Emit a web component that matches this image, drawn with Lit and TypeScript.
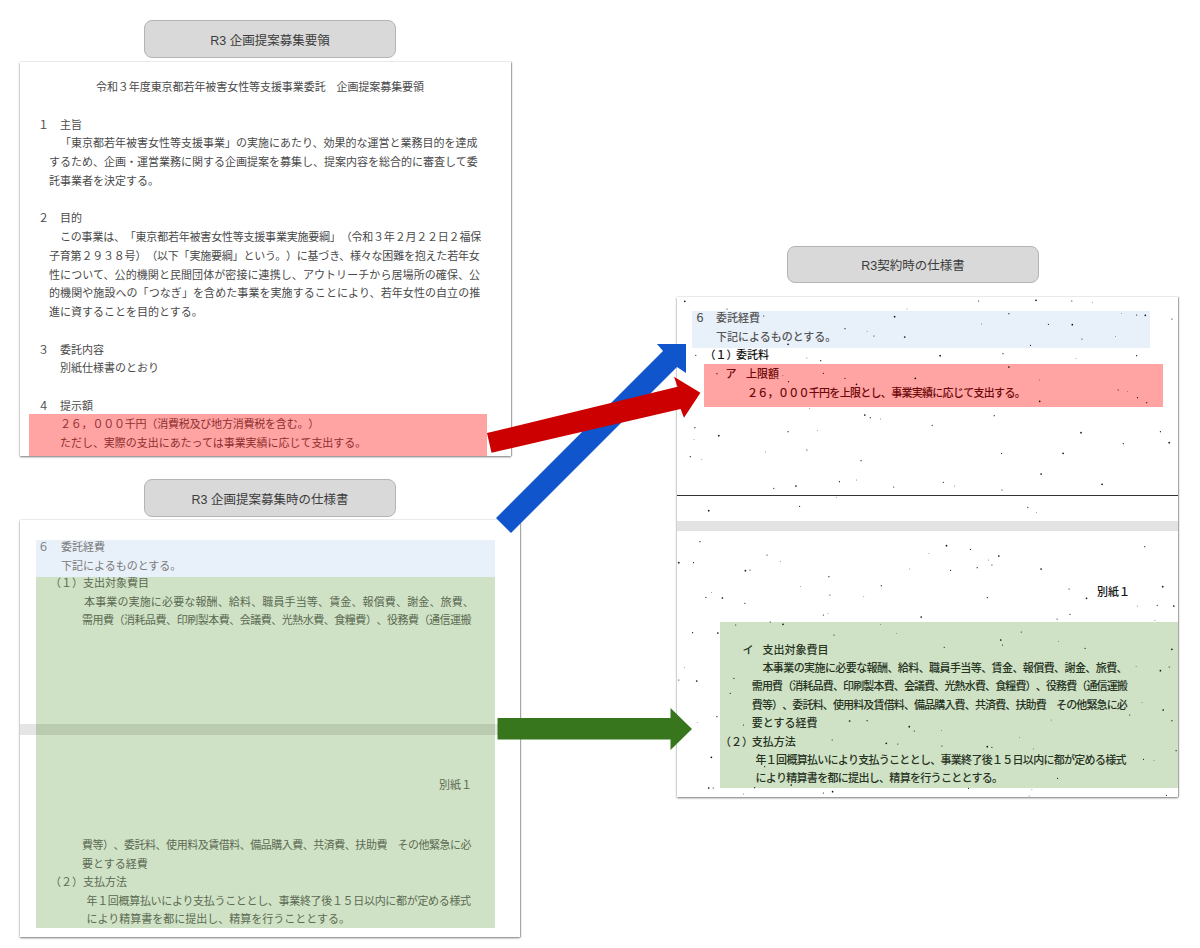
import { LitElement, html, css, svg } from "lit";
import { customElement } from "lit/decorators.js";

interface Row { x: number; t: string; end?: number; px?: number; p?: string }

const FS = 11;

const doc1Top: (Row | null)[] = [
  { x: 96, t: "令和３年度東京都若年被害女性等支援事業委託　企画提案募集要領", end: 424 },
  null,
  { px: 38, p: "１", x: 60, t: "主旨" },
  { x: 60, t: "「東京都若年被害女性等支援事業」の実施にあたり、効果的な運営と業務目的を達成", end: 478 },
  { x: 49, t: "するため、企画・運営業務に関する企画提案を募集し、提案内容を総合的に審査して委", end: 478 },
  { x: 49, t: "託事業者を決定する。" },
  null,
  { px: 38, p: "２", x: 60, t: "目的" },
  { x: 60, t: "この事業は、「東京都若年被害女性等支援事業実施要綱」（令和３年２月２２日２福保", end: 481 },
  { x: 49, t: "子育第２９３８号）（以下「実施要綱」という。）に基づき、様々な困難を抱えた若年女", end: 481 },
  { x: 49, t: "性について、公的機関と民間団体が密接に連携し、アウトリーチから居場所の確保、公", end: 481 },
  { x: 49, t: "的機関や施設への「つなぎ」を含めた事業を実施することにより、若年女性の自立の推", end: 481 },
  { x: 49, t: "進に資することを目的とする。" },
  null,
  { px: 38, p: "３", x: 60, t: "委託内容" },
  { x: 60, t: "別紙仕様書のとおり" },
  null,
  { px: 38, p: "４", x: 60, t: "提示額" },
];
const doc1Red: Row[] = [
  { x: 60, t: "２６，０００千円（消費税及び地方消費税を含む。）", end: 319 },
  { x: 60, t: "ただし、実際の支出にあたっては事業実績に応じて支出する。", end: 367 },
];

const doc2Blue: Row[] = [
  { px: 38, p: "６", x: 61, t: "委託経費" },
  { x: 61, t: "下記によるものとする。" },
];
const doc2GreenA: Row[] = [
  { px: 50, p: "（１）", x: 83, t: "支出対象費目" },
  { x: 84, t: "本事業の実施に必要な報酬、給料、職員手当等、賃金、報償費、謝金、旅費、", end: 474 },
  { x: 82, t: "需用費（消耗品費、印刷製本費、会議費、光熱水費、食糧費）、役務費（通信運搬", end: 471 },
];
const doc2GreenB: Row = { x: 439, t: "別紙１" };
const doc2GreenC: Row[] = [
  { x: 82, t: "費等）、委託料、使用料及賃借料、備品購入費、共済費、扶助費　その他緊急に必", end: 471 },
  { x: 82, t: "要とする経費" },
  { px: 50, p: "（２）", x: 83, t: "支払方法" },
  { x: 86.5, t: "年１回概算払いにより支払うこととし、事業終了後１５日以内に都が定める様式", end: 471 },
  { x: 86.5, t: "により精算書を都に提出し、精算を行うこととする。" },
];

const doc3Blue: Row[] = [
  { px: 694.6, p: "６", x: 716, t: "委託経費" },
  { x: 716, t: "下記によるものとする。" },
];
const doc3Mid: Row = { px: 704.5, p: "（１）", x: 736, t: "委託料" };
const doc3Red: Row[] = [
  { px: 725.6, p: "ア", x: 746, t: "上限額" },
  { x: 747, t: "２６，０００千円を上限とし、事業実績に応じて支出する。", end: 1025 },
];
const doc3Green: Row[] = [
  { px: 742.6, p: "イ", x: 762.4, t: "支出対象費目" },
  { x: 762.4, t: "本事業の実施に必要な報酬、給料、職員手当等、賃金、報償費、謝金、旅費、", end: 1127 },
  { x: 751.8, t: "需用費（消耗品費、印刷製本費、会議費、光熱水費、食糧費）、役務費（通信運搬", end: 1127 },
  { x: 751.8, t: "費等）、委託料、使用料及賃借料、備品購入費、共済費、扶助費　その他緊急に必", end: 1127 },
  { x: 751.8, t: "要とする経費" },
  { px: 720, p: "（２）", x: 751.8, t: "支払方法" },
  { x: 755.5, t: "年１回概算払いにより支払うこととし、事業終了後１５日以内に都が定める様式", end: 1126 },
  { x: 755.5, t: "により精算書を都に提出し、精算を行うこととする。", end: 1003 },
];

// Scan specks, as [x, y] read from the reference at two different crop scales.
const specksA = [[446,184],[538,207],[930,207],[1086,183],[1211,181],[1289,183],[1334,187],[618,228],[903,230],[1152,221],[1397,221],[1430,225],[1449,226],[1507,237],[1092,252],[1238,253],[1290,254],[795,266],[843,275],[858,288],[925,291],[1311,297],[1384,290],[1199,316],[671,313],[470,346],[712,354],[742,362],[1002,347],[1139,341],[1298,355],[1430,347],[1152,381],[516,401],[660,407],[748,400],[948,415],[795,415],[1218,420],[672,425],[820,433],[1390,450],[1411,455],[1432,473],[1219,484],[1452,488],[718,506],[1120,527],[838,525],[850,533],[872,537],[468,563],[520,587],[671,575],[735,572],[985,556],[1309,578],[1482,575],[466,598],[1401,611],[1501,608],[712,630],[622,636],[1136,640],[1270,640],[458,650],[483,658],[830,662],[1222,702],[783,725],[820,720],[1009,727],[688,738],[901,741],[1033,738],[640,745],[1355,733],[1137,750],[777,772],[696,799],[498,812],[1193,802],[1212,818]];
const specksB = [[479,65],[1016,77],[1448,80],[978,101],[1068,88],[1130,108],[625,105],[1107,120],[1115,135],[433,128],[465,128],[655,125],[1083,143],[578,152],[588,150],[936,147],[1025,151],[1222,147],[760,170],[698,200],[874,197],[1487,200],[1283,207],[504,218],[492,232],[528,234],[762,225],[836,230],[1105,233],[1321,235],[577,250],[1432,258],[1475,256],[1511,258],[748,285],[758,280],[1285,283],[961,291],[1257,297],[1470,302],[632,306],[660,313],[557,315],[872,313],[463,338],[518,339],[771,345],[907,340],[1179,336],[1134,360],[1138,375],[1260,365],[1011,382],[1507,388],[1318,385],[445,443],[433,480],[472,483],[553,475],[1429,440],[1501,441],[1482,452],[545,520],[1442,548],[516,590],[1488,570],[1415,585],[473,608],[574,615],[805,603],[843,602],[1244,600],[1507,602],[935,620],[946,633],[1005,632],[767,660],[885,670],[910,672],[1175,652],[1006,678],[1105,680],[1115,682],[1205,687],[1516,692],[504,712],[1445,718],[1468,722],[620,740],[498,804],[508,804],[574,822],[598,803],[678,795],[1064,805],[1202,808],[748,819],[768,815],[1495,826],[1196,828],[1258,775]];

function renderRow(r: Row, base: number, cls = "") {
  const start = r.px ?? r.x;
  const n = [...r.t].length;
  const ls = r.end ? (r.end - r.x - n * FS) / n : 0;
  return html`<div class="row ${cls}" style="margin-left:${start - base}px">
    ${r.p ? html`<span class="pre" style="width:${r.x - start}px">${r.p}</span>` : ""}
    <span style="letter-spacing:${ls.toFixed(3)}px">${r.t}</span>
  </div>`;
}

@customElement("app-root")
export class AppRoot extends LitElement {
  static styles = css`
    :host {
      display: block;
      width: 1200px;
      height: 948px;
      position: relative;
      overflow: hidden;
      background: #fff;
      font-family: "Liberation Serif", "Noto Sans CJK JP", serif;
      font-size: 11px;
      text-spacing-trim: space-all;
      font-feature-settings: "chws" 0;
    }
    .page { display: flex; height: 948px; }
    .left { width: 520px; padding-left: 20px; padding-top: 20px; box-sizing: content-box; }
    .right { margin-left: 137px; padding-top: 246px; width: 501px; }
    .label {
      box-sizing: border-box;
      width: 252px;
      height: 38px;
      display: flex;
      align-items: center;
      justify-content: center;
      background: #d9d9d9;
      border: 1px solid #b4b4b4;
      border-radius: 8px;
      font-family: "Liberation Sans", "Noto Sans CJK JP", sans-serif;
      font-size: 12.5px;
      color: #3c3c3c;
    }
    .l1 { margin-left: 124px; }
    .l2 { margin-left: 124px; margin-top: 23px; }
    .l3 { margin-left: 110px; height: 37px; }
    .paper {
      position: relative;
      background: #fff;
      box-shadow: 0 1px 2px rgba(0, 0, 0, 0.5), 1px 0 1px rgba(0, 0, 0, 0.2), 0 0 1px rgba(0, 0, 0, 0.12);
      box-sizing: border-box;
      color: #4a4a4a;
    }
    .p1 { width: 491px; height: 394px; margin-top: 4px; padding-top: 16px; overflow: hidden; }
    .p2 { width: 500px; height: 417px; margin-top: 3px; padding-top: 20px; }
    .p3 { width: 501px; height: 500px; margin-top: 14px; padding-top: 14px; color: #111; font-weight: 500; overflow: hidden; }
    .row { display: flex; white-space: pre; height: 12px; line-height: 12px; margin-bottom: 6.5px; }
    .tall { height: 18.76px; line-height: 18.76px; margin-bottom: 0; }
    .pre { display: inline-block; flex: none; }
    .blank { height: 18.76px; }

    .red1 { margin-left: 9px; width: 458px; height: 42px; margin-top: -1.78px; background: #ffa3a3; color: #8f2f2f; padding-top: 1.38px; box-sizing: border-box; }
    .blue2 { margin-left: 16px; width: 459px; height: 37px; padding-top: 1px; box-sizing: border-box; background: #e8f0f9; color: #7a7a7a; }
    .green2 { margin-left: 16px; width: 459px; height: 351px; background: #d0e2c5; color: #5b6a53; box-sizing: border-box; }
    .gap-a { margin-top: 153px; }
    .gap-b { margin-top: 48px; }
    .band { position: absolute; left: 0; right: 0; background: rgba(0, 0, 0, 0.1); }
    .band2 { top: 204px; height: 11px; }

    .blue3 { margin-left: 15px; width: 458px; height: 37px; padding-top: 1px; box-sizing: border-box; background: #e8f0f9; color: #555; }
    .mid3 { margin-top: 1px; margin-bottom: 3.3px; }
    .red3 { margin-left: 27px; width: 459px; height: 43px; padding-top: 3.5px; box-sizing: border-box; background: #ffa3a3; color: #6e0808; }
    .red3 .row { margin-bottom: 6.8px; }
    .rule { height: 1px; background: #333; margin-top: 88px; }
    .band3 { height: 10px; margin-top: 25px; background: #e3e3e3; }
    .right-note { margin-top: 54.7px; margin-bottom: 0; letter-spacing: -1px; }
    .green3 { margin-left: 43px; width: 458px; height: 166px; margin-top: 24.3px; padding-top: 21.3px; box-sizing: border-box; background: #d0e2c5; color: #26331f; }
    .green3 .row { margin-bottom: 6.4px; }
    .specks { position: absolute; inset: 0; width: 100%; height: 100%; pointer-events: none; }
    .arrows { position: absolute; left: 0; top: 0; width: 1200px; height: 948px; pointer-events: none; }
  `;

  private specks() {
    const dots = [
      ...specksA.map(([x, y]) => [480 + x / 2.178 - 677, 240 + y / 3 - 297]),
      ...specksB.map(([x, y]) => [480 + x / 2.178 - 677, 520 + y / 3 - 297]),
    ];
    return svg`${dots.map(
      ([x, y], i) => svg`<circle cx=${x.toFixed(1)} cy=${y.toFixed(1)} r=${i % 4 === 0 ? 0.85 : i % 4 === 2 ? 0.4 : 0.6} fill="#111"></circle>`
    )}`;
  }

  render() {
    return html`
      <div class="page">
        <div class="left">
          <div class="label l1">R3 企画提案募集要領</div>
          <div class="paper p1">
            ${doc1Top.map((r) => (r ? renderRow(r, 20, "tall") : html`<div class="blank"></div>`))}
            <div class="red1">${doc1Red.map((r) => renderRow(r, 29, "tall"))}</div>
          </div>
          <div class="label l2">R3 企画提案募集時の仕様書</div>
          <div class="paper p2">
            <div class="blue2">${doc2Blue.map((r) => renderRow(r, 36))}</div>
            <div class="green2">
              ${doc2GreenA.map((r) => renderRow(r, 36))}
              ${renderRow(doc2GreenB, 36, "gap-a")}
              ${doc2GreenC.map((r, i) => renderRow(r, 36, i === 0 ? "gap-b" : ""))}
            </div>
            <div class="band band2"></div>
          </div>
        </div>
        <div class="right">
          <div class="label l3">R3契約時の仕様書</div>
          <div class="paper p3">
            <div class="blue3">${doc3Blue.map((r) => renderRow(r, 692))}</div>
            ${renderRow(doc3Mid, 677, "mid3")}
            <div class="red3">${doc3Red.map((r) => renderRow(r, 704))}</div>
            <div class="rule"></div>
            <div class="band3"></div>
            ${renderRow({ x: 1097, t: "別紙１" }, 677, "right-note")}
            <div class="green3">${doc3Green.map((r) => renderRow(r, 720))}</div>
            <svg class="specks" viewBox="0 0 501 500">${this.specks()}</svg>
          </div>
        </div>
      </div>
      <svg class="arrows" viewBox="0 0 1200 948">
        <polygon fill="#38761d" points="497.5,718 670.5,718 670.5,708 692,729 670.5,750 670.5,739.5 497.5,739.5"></polygon>
        <polygon fill="#1155cc" points="496,518 663,351 657,344 686,344 686,373 677,367 511,533"></polygon>
        <polygon fill="#cc0000" points="487,433 677.5,386.7 674,376.7 700.4,392.7 684,417.7 680.6,409 491.5,452.7"></polygon>
      </svg>
    `;
  }
}
